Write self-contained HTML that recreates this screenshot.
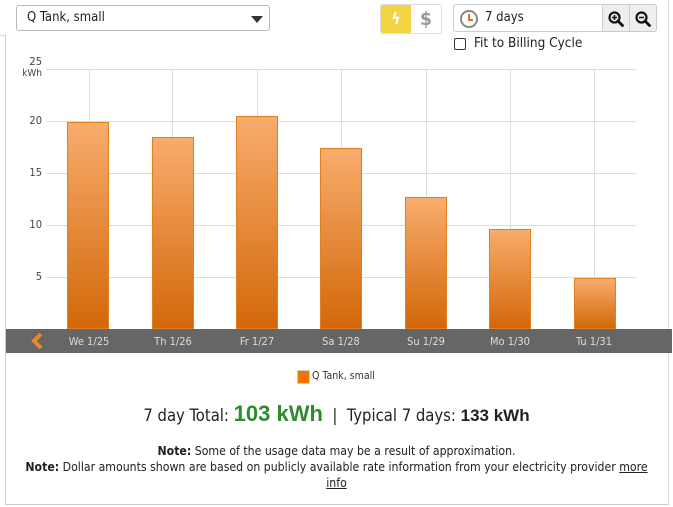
<!DOCTYPE html><html><head><style>
body{margin:0;width:673px;height:507px;background:#fff;font-family:"DejaVu Sans Condensed","Liberation Sans",sans-serif;position:relative;overflow:hidden;color:#333}
.a{position:absolute}
.bar{position:absolute;width:42px;box-sizing:border-box;border:1px solid #e2801f;background:linear-gradient(#f8ac6c,#d3680a)}
.gl{position:absolute;background:#ddd}
.yl{position:absolute;font-size:11px;color:#444;width:40px;text-align:right;left:2px}
.dl{position:absolute;top:335px;font-size:11px;color:#ddd;width:60px;text-align:center}
</style></head><body>
<div class="a" style="left:5px;top:35px;width:1px;height:470px;background:#ccc"></div>
<div class="a" style="left:5px;top:504px;width:664px;height:1px;background:#ccc"></div>
<div class="a" style="left:668px;top:0;width:1px;height:505px;background:#ddd"></div>
<div class="a" style="left:0;top:35px;width:5px;height:1px;background:#e8e0a0"></div>
<div class="a" style="left:16px;top:5px;width:254px;height:26px;box-sizing:border-box;border:1px solid #bbb;border-radius:3px;font-size:13px;line-height:24px;padding-left:10px;color:#222">Q Tank, small
<div class="a" style="right:6px;top:10px;width:0;height:0;border-left:6px solid transparent;border-right:6px solid transparent;border-top:7px solid #333"></div></div>
<div class="a" style="left:380px;top:4px;width:62px;height:30px;box-sizing:border-box;border:1px solid #ddd;border-radius:3px;overflow:hidden">
<div class="a" style="left:0;top:0;width:30px;height:30px;background:#f5d442;color:#fff;font-size:16px;text-align:center;line-height:28px;font-weight:bold">ϟ</div>
<div class="a" style="left:30px;top:0;width:30px;height:28px;color:#999;font-size:19px;text-align:center;line-height:28px;font-weight:bold">$</div></div>
<div class="a" style="left:453px;top:4px;width:204px;height:28px;box-sizing:border-box;border:1px solid #ccc;border-radius:3px;overflow:hidden">
<div class="a" style="left:6px;top:5px;width:14px;height:14px;border:2px solid #888;border-radius:50%"><div class="a" style="left:6px;top:2px;width:2px;height:6px;background:#e87020"></div><div class="a" style="left:6px;top:7px;width:5px;height:2px;background:#e87020"></div></div>
<div class="a" style="left:31px;top:0;font-size:13px;line-height:26px;color:#222">7 days</div>
<div class="a" style="left:148px;top:0;width:56px;height:28px;background:#eee;border-left:1px solid #ccc"></div>
<div class="a" style="left:175px;top:0;width:1px;height:28px;background:#ccc"></div>
<svg class="a" style="left:154px;top:6px" width="16" height="16" viewBox="0 0 16 16"><circle cx="6.5" cy="6.5" r="5" fill="none" stroke="#111" stroke-width="2.2"/><path d="M10 10l4.5 4.5" stroke="#111" stroke-width="2.8" stroke-linecap="round"/><path d="M4 6.5h5M6.5 4v5" stroke="#111" stroke-width="1.5"/></svg>
<svg class="a" style="left:181px;top:6px" width="16" height="16" viewBox="0 0 16 16"><circle cx="6.5" cy="6.5" r="5" fill="none" stroke="#111" stroke-width="2.2"/><path d="M10 10l4.5 4.5" stroke="#111" stroke-width="2.8" stroke-linecap="round"/><path d="M4 6.5h5" stroke="#111" stroke-width="1.5"/></svg>
</div>
<div class="a" style="left:454px;top:38px;width:10px;height:10px;border:1.5px solid #333;border-radius:2px"></div>
<div class="a" style="left:474px;top:35px;font-size:13.5px;color:#222">Fit to Billing Cycle</div>
<div class="gl" style="left:46px;top:69px;width:590px;height:1px"></div>
<div class="gl" style="left:46px;top:121px;width:590px;height:1px"></div>
<div class="gl" style="left:46px;top:173px;width:590px;height:1px"></div>
<div class="gl" style="left:46px;top:225px;width:590px;height:1px"></div>
<div class="gl" style="left:46px;top:277px;width:590px;height:1px"></div>
<div class="gl" style="left:89px;top:69px;width:1px;height:260px"></div>
<div class="gl" style="left:172px;top:69px;width:1px;height:260px"></div>
<div class="gl" style="left:257px;top:69px;width:1px;height:260px"></div>
<div class="gl" style="left:341px;top:69px;width:1px;height:260px"></div>
<div class="gl" style="left:426px;top:69px;width:1px;height:260px"></div>
<div class="gl" style="left:510px;top:69px;width:1px;height:260px"></div>
<div class="gl" style="left:594px;top:69px;width:1px;height:260px"></div>
<div class="yl" style="top:55px">25</div><div class="yl" style="top:68px;font-size:10px">kWh</div>
<div class="yl" style="top:114px">20</div><div class="yl" style="top:166px">15</div><div class="yl" style="top:218px">10</div><div class="yl" style="top:270px">5</div>
<div class="bar" style="left:67px;top:122px;height:207px"></div>
<div class="bar" style="left:152px;top:137px;height:192px"></div>
<div class="bar" style="left:236px;top:116px;height:213px"></div>
<div class="bar" style="left:320px;top:148px;height:181px"></div>
<div class="bar" style="left:405px;top:197px;height:132px"></div>
<div class="bar" style="left:489px;top:229px;height:100px"></div>
<div class="bar" style="left:574px;top:278px;height:51px"></div>
<div class="a" style="left:6px;top:329px;width:666px;height:24px;background:#666"></div>
<svg class="a" style="left:31px;top:333px" width="14" height="16" viewBox="0 0 14 16"><path d="M10 1L3 8l7 7" fill="none" stroke="#e8892a" stroke-width="4"/></svg>
<div class="dl" style="left:59px">We 1/25</div><div class="dl" style="left:143px">Th 1/26</div><div class="dl" style="left:227px">Fr 1/27</div><div class="dl" style="left:311px">Sa 1/28</div><div class="dl" style="left:396px">Su 1/29</div><div class="dl" style="left:480px">Mo 1/30</div><div class="dl" style="left:564px">Tu 1/31</div>
<div class="a" style="left:297px;top:370px;width:11px;height:12px;background:#ee7500;border:1px solid #ccc"></div>
<div class="a" style="left:312px;top:370px;font-size:10.5px;color:#333">Q Tank, small</div>
<div class="a" style="left:0;top:401px;width:673px;text-align:center;font-size:16.5px;color:#222">7 day Total: <b style="color:#2e8b2e;font-size:22px;font-family:'Liberation Sans',sans-serif">103 kWh</b> &nbsp;|&nbsp; Typical 7 days: <b style="font-family:'Liberation Sans',sans-serif;font-size:17px">133 kWh</b></div>
<div class="a" style="left:0;top:443px;width:673px;text-align:center;font-size:12.2px;line-height:16px;color:#222"><b>Note:</b> Some of the usage data may be a result of approximation.<br><span style="display:inline-block;width:628px"><b>Note:</b> Dollar amounts shown are based on publicly available rate information from your electricity provider <u>more</u> <u>info</u></span></div>
</body></html>
